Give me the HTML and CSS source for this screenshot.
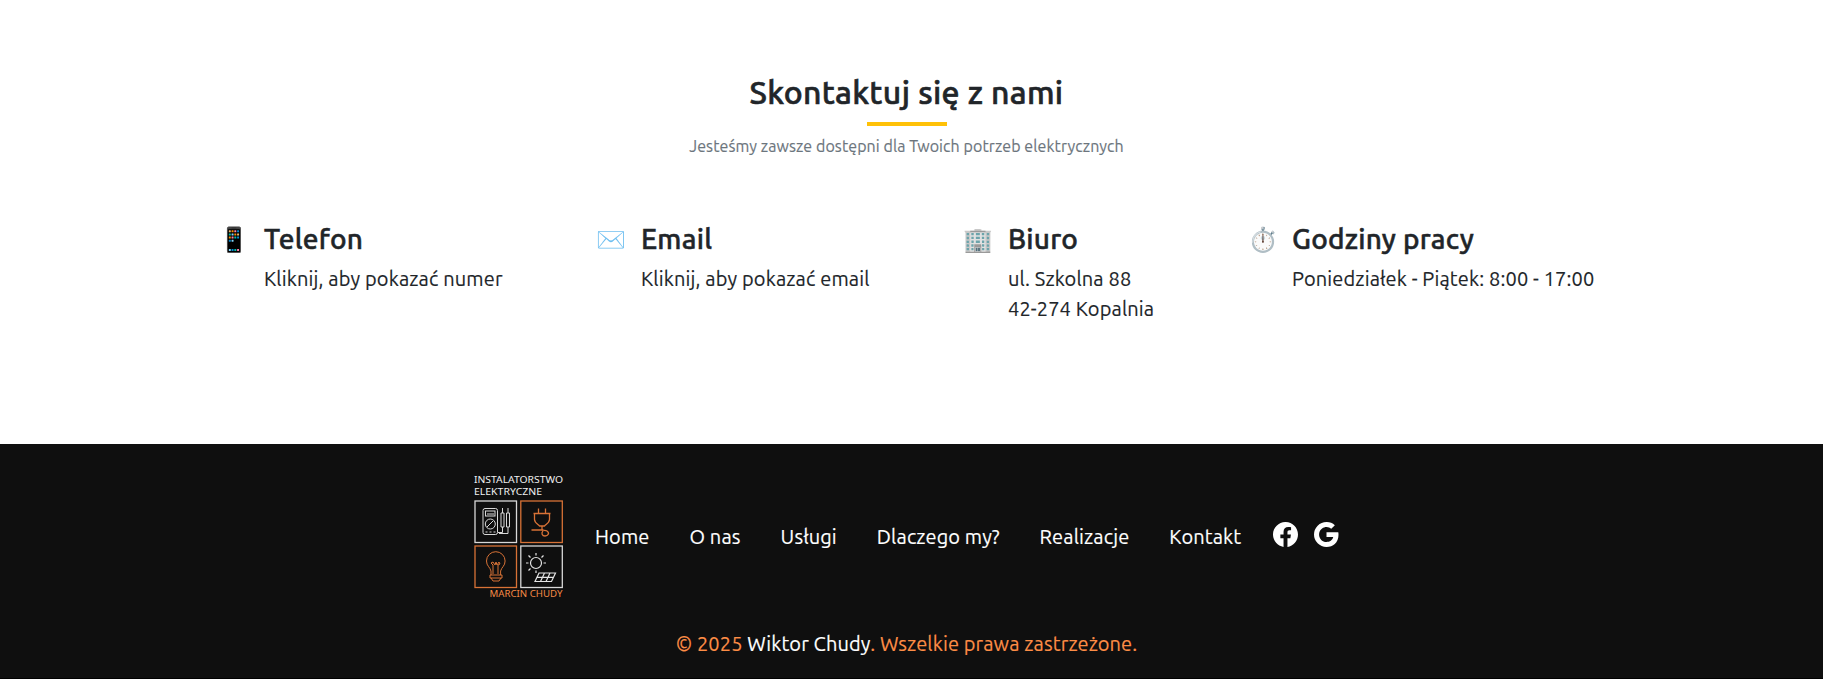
FILE: index.html
```html
<!DOCTYPE html>
<html lang="pl">
<head>
<meta charset="utf-8">
<title>Kontakt</title>
<link rel="stylesheet" href="styles.css">
</head>
<body>
<section class="contact">
  <h2 class="contact-title">Skontaktuj się z nami</h2>
  <div class="contact-rule"></div>
  <p class="contact-lead">Jesteśmy zawsze dostępni dla Twoich potrzeb elektrycznych</p>
  <div class="cards">
    <div class="card phone"><span class="emoji">📱</span><div class="card-body"><h3>Telefon</h3><p>Kliknij, aby pokazać numer</p></div></div>
    <div class="card email"><span class="emoji">✉️</span><div class="card-body"><h3>Email</h3><p>Kliknij, aby pokazać email</p></div></div>
    <div class="card office"><span class="emoji">🏢</span><div class="card-body"><h3>Biuro</h3><p>ul. Szkolna 88<br>42-274 Kopalnia</p></div></div>
    <div class="card hours"><span class="emoji">⏱️</span><div class="card-body"><h3>Godziny pracy</h3><p>Poniedziałek - Piątek: 8:00 - 17:00</p></div></div>
  </div>
</section>
<footer class="footer">
  <div class="footer-row">
    <svg class="logo" width="92" height="126" viewBox="0 0 92 126" fill="none">
      <g fill="#f0f0f0" class="logo-text">
        <text x="1" y="10" textLength="89" lengthAdjust="spacingAndGlyphs">INSTALATORSTWO</text>
        <text x="1" y="21.700" textLength="68" lengthAdjust="spacingAndGlyphs">ELEKTRYCZNE</text>
      </g>
      <text class="logo-text" fill="#f58a45" x="16.500" y="123.700" textLength="73" lengthAdjust="spacingAndGlyphs">MARCIN CHUDY</text>
      <g stroke="#d8d8d8" stroke-width="1.300">
        <rect x="2" y="28" width="41.500" height="41.500"/>
        <rect x="47.800" y="73" width="41.500" height="41.500"/>
      </g>
      <g stroke="#d87236" stroke-width="1.300">
        <rect x="47.800" y="28" width="41.500" height="41.500"/>
        <rect x="2" y="73" width="41.500" height="41.500"/>
      </g>
      <g stroke="#d8d8d8" stroke-width="1">
        <rect x="10" y="35.500" width="14.500" height="26" rx="2"/>
        <rect x="12.500" y="38" width="9.500" height="5"/>
        <path d="M14 41h7"/>
        <circle cx="17.300" cy="51" r="5"/>
        <path d="M14 54l6-6M12.500 59h2M16.500 59h2M20.500 59h2"/>
        <path d="M28 40v14h3V40zM33.500 40v14h3V40zM29.500 40v-5M35 40v-5M29.500 54v5.500H25M35 54v6.500h-9"/>
      </g>
      <g stroke="#d87236" stroke-width="1.300">
        <path d="M60.500 40.500h17M61.500 40.500v6c0 3 3 4.500 5 6.500h5c2-2 5-3.500 5-6.500v-6M65.500 40.500v-5M72.500 40.500v-5M69 53v3c0 2 3 1 5 2 3 2 1 5-2 5s-4-3-2-5M58.500 57h12"/>
      </g>
      <g stroke="#d87236" stroke-width="1">
        <path d="M18 102v-4c-1-4-4.500-5-4.500-10a9.300 9.300 0 0 1 18.600 0c0 5-3.500 6-4.500 10v4M20 101v-9l-2-2 2-1 2 3 1-3 1 3 2-3 1 2-2 1v9M17 102h12v3H17zM18 105l2 3h6l2-3"/>
      </g>
      <g stroke="#e4e4e4" stroke-width="1.200">
        <circle cx="63" cy="90" r="5.500"/>
        <path d="M63 82.500V80M63 97.500v2.500M55.500 90H53M70.500 90H73M57.500 84.500l-2-2M68.500 84.500l2-2M57.500 95.500l-2 2"/>
        <path d="M66 100h16.500l-4 8.500H62zM64 104.300h16M71.500 100l-4 8.500M77 100l-4 8.500"/>
      </g>
    </svg>
    <nav class="nav">
      <a>Home</a><a>O nas</a><a>Usługi</a><a>Dlaczego my?</a><a>Realizacje</a><a>Kontakt</a>
    </nav>
    <div class="social">
      <svg width="25" height="25" viewBox="0 0 16 16" fill="#fff"><path d="M16 8.049c0-4.446-3.582-8.050-8-8.050C3.580 0-.002 3.603-.002 8.050c0 4.017 2.926 7.347 6.750 7.951v-5.625h-2.030V8.050H6.750V6.275c0-2.017 1.195-3.131 3.022-3.131.876 0 1.791.157 1.791.157v1.980h-1.009c-.993 0-1.303.621-1.303 1.258v1.510h2.218l-.354 2.326H9.250V16c3.824-.604 6.750-3.934 6.750-7.951"/></svg>
      <svg width="25" height="25" viewBox="0 0 16 16" fill="#fff"><path d="M15.545 6.558a9.400 9.400 0 0 1 .139 1.626c0 2.434-.870 4.492-2.384 5.885h.002C11.978 15.292 10.158 16 8 16A8 8 0 1 1 8 0a7.700 7.700 0 0 1 5.352 2.082l-2.284 2.284A4.350 4.350 0 0 0 8 3.166c-2.087 0-3.860 1.408-4.492 3.304a4.800 4.800 0 0 0 0 3.063h.003c.635 1.893 2.405 3.301 4.492 3.301 1.078 0 2.004-.276 2.722-.764h-.003a3.700 3.700 0 0 0 1.599-2.431H8v-3.080z"/></svg>
    </div>
  </div>
  <p class="copyright">© 2025 <b>Wiktor Chudy</b>. Wszelkie prawa zastrzeżone.</p>
</footer>
</body>
</html>
```
FILE: styles.css
```css
* { box-sizing: border-box; }
body { margin: 0; background: #fff; color: #212529; font-family: Ubuntu, "Noto Sans", sans-serif; font-size: 20px; line-height: 30px; height: 679px; overflow: hidden; }
h2, h3, p { margin: 0; }
.contact { width: 1813px; height: 444px; padding-top: 73px; text-align: center; }
.contact-title { font-size: 32px; font-weight: 500; line-height: 38px; letter-spacing: 0.33px; -webkit-text-stroke: 0.6px; }
.contact-rule { width: 80px; height: 4px; margin: 11px auto 0; background: #ffc107; }
.contact-lead { margin-top: 8px; font-size: 16px; line-height: 24px; color: #6c757d; letter-spacing: 0.08px; -webkit-text-stroke: 0.15px; }
.cards { display: grid; grid-template-columns: 377px 367px 284px 400px; margin: 64px 0 0 219px; text-align: left; }
.card { display: flex; white-space: nowrap; }
.emoji { width: 45px; font-size: 24px; line-height: 36px; }
.card h3 { font-size: 28px; font-weight: 500; line-height: 34px; margin-bottom: 8px; letter-spacing: 0.24px; -webkit-text-stroke: 0.5px; }
.card p { letter-spacing: 0.14px; -webkit-text-stroke: 0.15px; }
.hours .emoji { padding-left: 1px; }
.footer { height: 235px; background: #0f0f0f; color: #fff; border-bottom: 1px solid #000; }
.footer-row { display: flex; height: 185px; padding: 29px 0 0 473px; }
.nav { display: flex; gap: 40px; margin: 49px 32px 0 30px; white-space: nowrap; letter-spacing: 0.13px; -webkit-text-stroke: 0.15px; }
.social { display: flex; gap: 16px; margin: 49px 0 0; }
.logo-text { font-family: "Noto Sans", sans-serif; font-size: 8.5px; font-weight: 400; }
.copyright { width: 1813px; text-align: center; color: #fd8d46; letter-spacing: 0.11px; -webkit-text-stroke: 0.15px; }
.copyright b { font-weight: inherit; color: #fff; }
```
